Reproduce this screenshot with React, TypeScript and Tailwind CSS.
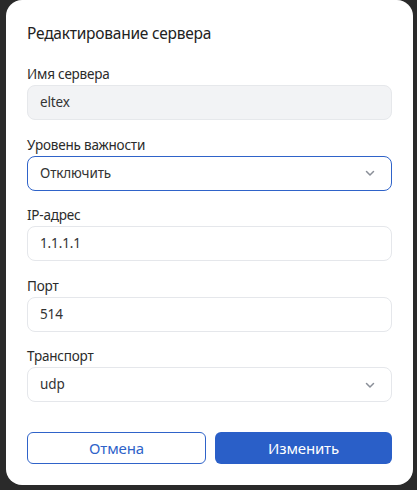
const font = { fontFamily: '"Noto Sans", "Open Sans", sans-serif' };

function Chevron() {
  return (
    <svg width="12" height="12" viewBox="0 0 12 12" fill="none" className="text-[#8a8f98]">
      <path d="M2.5 4.5 6 8l3.5-3.5" stroke="currentColor" strokeWidth="1.5" strokeLinecap="round" strokeLinejoin="round" />
    </svg>
  );
}

interface FieldProps {
  label: string;
  value: string;
  kind?: 'input' | 'disabled' | 'select' | 'focused';
}

function Field({ label, value, kind = 'input' }: FieldProps) {
  const box =
    kind === 'disabled'
      ? 'bg-[#f2f3f5] border-[#e6e8eb]'
      : kind === 'focused'
        ? 'bg-white border-[#2f63c9]'
        : 'bg-white border-[#e5e7eb]';
  return (
    <div className="flex flex-col">
      <label className="h-5 text-[13.5px] leading-5 tracking-[-0.015em] text-[#2b2b2b]">{label}</label>
      <div
        className={`mt-[1px] h-[35px] w-full rounded-lg border flex items-center justify-between pl-3 pr-[15px] ${box}`}
      >
        <span className="text-[13.5px] tracking-[-0.01em] text-[#333]">{value}</span>
        {(kind === 'select' || kind === 'focused') && <Chevron />}
      </div>
    </div>
  );
}

export default function App() {
  return (
    <div className="w-[417px] h-[490px] bg-[#2a2a2a] overflow-hidden" style={font}>
      <div className="ml-[6px] w-[407px] h-[485px] bg-white rounded-2xl px-[21px] pt-[21px]">
        {/* Title */}
        <h1 className="text-[15.5px] leading-6 tracking-[-0.015em] text-[#222]">Редактирование сервера</h1>

        {/* Fields */}
        <div className="mt-[19px] flex flex-col gap-[14.5px]">
          <Field label="Имя сервера" value="eltex" kind="disabled" />
          <Field label="Уровень важности" value="Отключить" kind="focused" />
          <Field label="IP-адрес" value="1.1.1.1" />
          <Field label="Порт" value="514" />
          <Field label="Транспорт" value="udp" kind="select" />
        </div>

        {/* Buttons */}
        <div className="mt-[30px] flex gap-[9px]">
          <button className="flex-1 h-[32px] rounded-md border border-[#2f63c9] bg-white text-[15px] tracking-[-0.01em] text-[#2f63c9]">
            Отмена
          </button>
          <button className="flex-1 h-[32px] rounded-md bg-[#2a5fc8] text-[15px] tracking-[-0.01em] text-white">
            Изменить
          </button>
        </div>
      </div>
    </div>
  );
}
